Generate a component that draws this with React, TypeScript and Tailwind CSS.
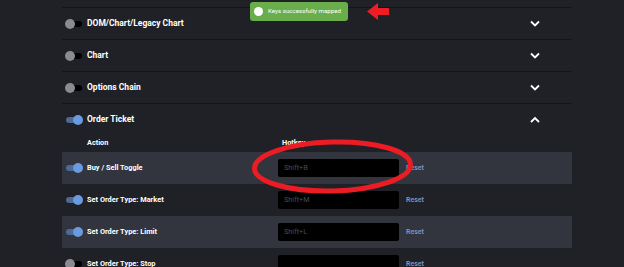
import React from "react";

function Toggle({ on }: { on: boolean }) {
  return (
    <div className="relative w-[18px] h-[10px] shrink-0">
      <div
        className={
          on
            ? "absolute left-[1px] top-[2px] w-[16px] h-[6px] rounded-full bg-[#4d6a96]"
            : "absolute left-[1px] top-[2px] w-[16px] h-[6px] rounded-full bg-black"
        }
      />
      <div
        className={
          on
            ? "absolute right-0 top-0 w-[10px] h-[10px] rounded-full bg-[#6a9be0]"
            : "absolute left-0 top-0 w-[10px] h-[10px] rounded-full bg-[#8b8a91]"
        }
      />
    </div>
  );
}

function Chevron({ up }: { up?: boolean }) {
  return (
    <svg width="10" height="7" viewBox="0 0 10 7" className="mr-[32px]">
      <path
        d={up ? "M1 6 L5 2 L9 6" : "M1 1.5 L5 5.5 L9 1.5"}
        fill="none"
        stroke="white"
        strokeWidth="1.8"
      />
    </svg>
  );
}

function Section({ title, on, open }: { title: string; on: boolean; open?: boolean }) {
  return (
    <div className="h-[32px] border-t border-[#141518] flex items-center pl-[3px]">
      <Toggle on={on} />
      <span className="ml-[4px] text-[8.5px] font-bold text-white flex-1">{title}</span>
      <Chevron up={open} />
    </div>
  );
}

const rows = [
  { name: "Buy / Sell Toggle", key: "Shift+B", on: true },
  { name: "Set Order Type: Market", key: "Shift+M", on: true },
  { name: "Set Order Type: Limit", key: "Shift+L", on: true },
  { name: "Set Order Type: Stop", key: "", on: false },
];

export default function App() {
  return (
    <div
      className="relative w-[624px] h-[267px] overflow-hidden bg-[#202126]"
      style={{ fontFamily: "Roboto, 'Liberation Sans', sans-serif" }}
    >
      <div className="ml-[62px] w-[510px] pt-[7px]">
        <Section title="DOM/Chart/Legacy Chart" on={false} />
        <Section title="Chart" on={false} />
        <Section title="Options Chain" on={false} />
        <Section title="Order Ticket" on={true} open />

        <div className="h-[17px] flex items-center text-[7.3px] font-bold text-white">
          <span className="ml-[25px] w-[195px]">Action</span>
          <span>Hotkey</span>
        </div>

        {rows.map((r, i) => (
          <div
            key={r.name}
            className={
              i % 2 === 0
                ? "h-[32px] flex items-center pl-[3px] bg-[#32353d]"
                : "h-[32px] flex items-center pl-[3px]"
            }
          >
            <Toggle on={r.on} />
            <span className="ml-[4px] w-[191px] text-[7.4px] font-bold text-white">{r.name}</span>
            <div className="w-[121px] h-[18px] rounded-[2px] bg-black flex items-center pl-[6px] text-[7.3px] text-[#4a4b50]">
              {r.key}
            </div>
            <span className="ml-[7px] text-[7px] font-semibold text-[#7b95bf]">Reset</span>
          </div>
        ))}
      </div>

      {/* toast */}
      <div className="absolute left-[250px] top-[2px] w-[98px] h-[19px] rounded-[3px] bg-[#69ae4b] flex items-center pl-[4px]">
        <div className="w-[9px] h-[9px] rounded-full bg-white shrink-0" />
        <span className="ml-[5px] text-[6.2px] text-white whitespace-nowrap">Keys successfully mapped</span>
      </div>

      {/* red arrow */}
      <svg className="absolute left-[366px] top-[2px]" width="24" height="19" viewBox="0 0 24 19">
        <path d="M1 9.5 L12 1 L12 6 L23 6 L23 13 L12 13 L12 18 Z" fill="#ee1c25" />
      </svg>

      {/* red ellipse */}
      <svg className="absolute left-[250px] top-[138px]" width="170" height="60" viewBox="0 0 170 60">
        <ellipse
          cx="82.5"
          cy="28.5"
          rx="78"
          ry="24.5"
          fill="none"
          stroke="#ec1c24"
          strokeWidth="5"
          transform="rotate(-1.5 82.5 28.5)"
        />
      </svg>
    </div>
  );
}
